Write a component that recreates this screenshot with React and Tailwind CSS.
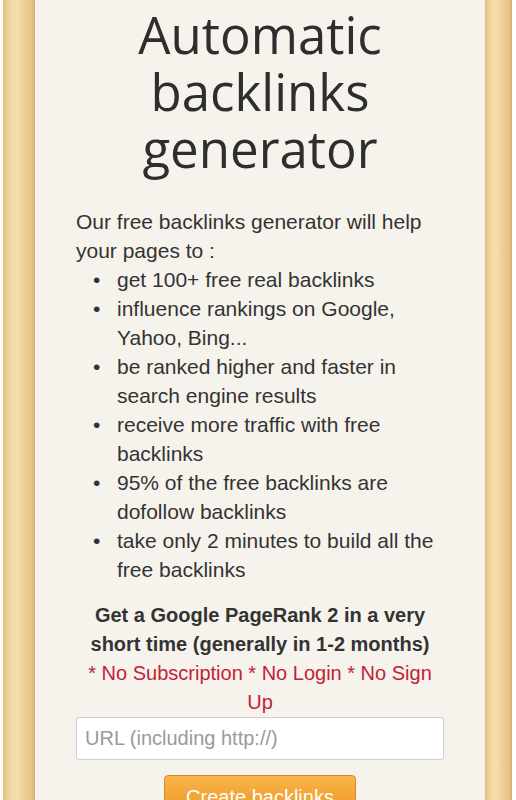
import React from 'react';

const features = [
  'get 100+ free real backlinks',
  'influence rankings on Google, Yahoo, Bing...',
  'be ranked higher and faster in search engine results',
  'receive more traffic with free backlinks',
  '95% of the free backlinks are dofollow backlinks',
  'take only 2 minutes to build all the free backlinks',
];

// wood strip on each side of the page
const Frame = ({ className }) => (
  <div
    className={`shrink-0 bg-[linear-gradient(90deg,#e4c084,#f2d9a6_25%,#f5deb0_45%,#eecb92_70%,#e6c287_90%,#d6ae6e)] ${className}`}
  />
);

export default function App() {
  return (
    <div className="flex min-h-[800px] w-full bg-white font-['Liberation_Sans',Arial,sans-serif] text-[#333]">
      <Frame className="ml-[3px] w-[32px]" />
      <main className="flex-1 bg-[#f6f3ec] px-[41px] pb-10">
        <h1 className="pt-[6px] text-center font-['Open_Sans',sans-serif] text-[51px] leading-[57px] text-[#2e2e2e]">
          Automatic backlinks generator
        </h1>

        <p className="mt-[30px] text-[21px] leading-[29px]">
          Our free backlinks generator will help your pages to :
        </p>
        <ul className="pl-[17px] text-[21px] leading-[29px]">
          {features.map((f) => (
            <li key={f} className="flex">
              <span className="w-[24px] shrink-0">•</span>
              <span>{f}</span>
            </li>
          ))}
        </ul>

        <div className="mt-[17px] text-center text-[20px] leading-[29px]">
          <p className="font-bold">
            Get a Google PageRank 2 in a very short time (generally in 1-2 months)
          </p>
          <p className="text-[#c2213a]">* No Subscription * No Login * No Sign Up</p>
        </div>

        <input
          type="text"
          placeholder="URL (including http://)"
          className="block h-[43px] w-full rounded-[3px] border border-[#cfcfcf] bg-white px-[8px] text-[20px] placeholder:text-[#9a9a9a] outline-none"
        />

        <div className="mt-[15px] flex justify-center">
          <button className="h-[44px] w-[192px] rounded-[4px] border border-[#d98a20] bg-[linear-gradient(180deg,#f7b44a,#ee951f)] text-[20px] text-white">
            Create backlinks
          </button>
        </div>
      </main>
      <Frame className="mr-[4px] w-[27px]" />
    </div>
  );
}
